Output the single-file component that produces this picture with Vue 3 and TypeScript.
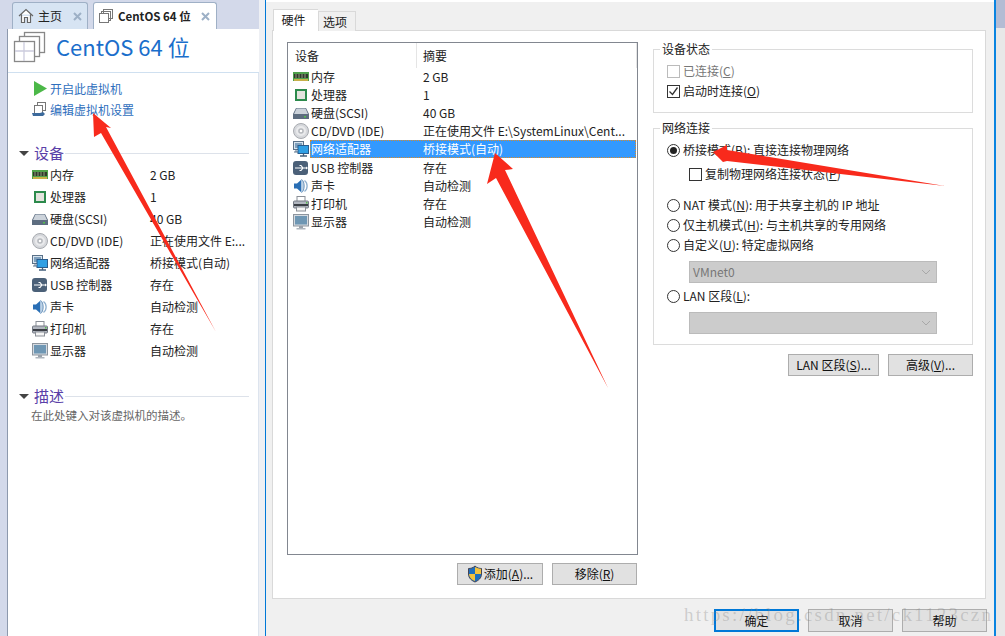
<script setup lang="ts">
interface Row { icon: string; name: string; value: string; selected?: boolean }
const sideRows: Row[] = [
  { icon: 'ram', name: '内存', value: '2 GB' },
  { icon: 'cpu', name: '处理器', value: '1' },
  { icon: 'disk', name: '硬盘(SCSI)', value: '40 GB' },
  { icon: 'cd', name: 'CD/DVD (IDE)', value: '正在使用文件 E:...' },
  { icon: 'net', name: '网络适配器', value: '桥接模式(自动)' },
  { icon: 'usb', name: 'USB 控制器', value: '存在' },
  { icon: 'sound', name: '声卡', value: '自动检测' },
  { icon: 'print', name: '打印机', value: '存在' },
  { icon: 'screen', name: '显示器', value: '自动检测' },
]
const dialogRows: Row[] = sideRows.map((r) =>
  r.icon === 'cd'
    ? { ...r, value: '正在使用文件 E:\\SystemLinux\\Cent...' }
    : r.icon === 'net'
      ? { ...r, selected: true }
      : r,
)
const icons: Record<string, string> = {
  ram: '<rect x="0" y="3" width="16" height="9" fill="#4fa04a"/><rect x="1" y="5" width="14" height="4" fill="#2f3a2c"/><path d="M3 5V9M6 5V9M9 5V9M12 5V9" stroke="#8f9a7c"/><rect x="1" y="10" width="14" height="2" fill="#c7b04a"/>',
  cpu: '<rect x="2" y="2" width="12" height="12" fill="#2c8a4c"/><rect x="4" y="4" width="8" height="8" fill="#e3e3de"/>',
  disk: '<path d="M3 3H13L16 9V14H0V9Z" fill="#5d6d80"/><path d="M3.500 3.500H12.500L15 9H1Z" fill="#ccd3db"/><rect x="11" y="11" width="2" height="1.500" fill="#54c04c"/>',
  cd: '<circle cx="8" cy="8" r="7.500" fill="#d6d8dc" stroke="#a8abb0"/><circle cx="8" cy="8" r="5" fill="#e9eaec"/><circle cx="8" cy="8" r="2.800" fill="#b5b8bd"/><circle cx="8" cy="8" r="1.300" fill="#fff"/>',
  net: '<rect x="0.500" y="0.500" width="10" height="8" fill="#d8e4ee" stroke="#5a7188"/><rect x="2" y="2" width="7" height="5" fill="#7fa0bd"/><path d="M1 11H5M3 9V11" stroke="#5a7188"/><rect x="5" y="4.500" width="10.500" height="8" fill="#2f9fe4" stroke="#2a5c8c"/><path d="M7 15H14M10.500 13V15" stroke="#44607c" stroke-width="1.300"/>',
  usb: '<rect x="0" y="1" width="15" height="14" rx="3" fill="#4b6078"/><path d="M2 8H13M10 8 8 5.500H6.500M10 8 8 10.500H6.500" fill="none" stroke="#fff" stroke-width="1.200"/><path d="M13 6.500 15 8 13 9.500Z" fill="#fff"/>',
  sound: '<path d="M1 5.500H4L8.500 1.500V14.500L4 10.500H1Z" fill="#2a6fb5"/><path d="M8.500 1.500C12 3 12 13 8.500 14.500" fill="#bcd2e6" stroke="#6a93bb"/><path d="M11.500 2.500C15 5 15 11 11.500 13.500" fill="none" stroke="#8fb0cf" stroke-width="1.300"/>',
  print: '<rect x="4" y="0.500" width="8" height="5" fill="#fff" stroke="#8a8f97"/><rect x="0.500" y="5" width="15" height="7" rx="1" fill="#b2b7c0" stroke="#747a84"/><rect x="1" y="8" width="14" height="2" fill="#3b3f46"/><rect x="3.500" y="11" width="9" height="4" fill="#f5f5f5" stroke="#8a8f97"/><rect x="13" y="6" width="1.500" height="1.500" fill="#54c04c"/>',
  screen: '<rect x="0.500" y="0.500" width="15" height="11.500" fill="#d5dae0" stroke="#8d959e"/><rect x="2" y="2" width="12" height="8.500" fill="#6f97b4"/><path d="M6 12H10V14H6Z" fill="#9aa2ab"/><rect x="3.500" y="14" width="9" height="1.500" fill="#aeb5bd"/>',
}
const arrows = [
  '93 113 111 128 106 127 216 332 101 133 94 137',
  '495 153 513 169 505 170 608 388 496 178 487 184',
  '713 152 727 145 727 150 945 186 727 161 723 162',
]
</script>

<template>
  <div class="screen">
    <aside class="side">
      <div class="tabs">
        <div class="tab home">
          <svg width="16" height="16" viewBox="0 0 16 16"><path d="M1 8 8 1.500 15 8M3.500 6.500V14.500H6.500V9.500H9.500V14.500H12.500V6.500" fill="#fff" stroke="#666" stroke-width="1.200"/></svg>
          <span>主页</span>
          <svg class="x" width="9" height="9" viewBox="0 0 9 9"><path d="M1 1 8 8M8 1 1 8" stroke="#9db0c6" stroke-width="2"/></svg>
        </div>
        <div class="tab active">
          <svg width="16" height="16" viewBox="0 0 16 16" fill="none" stroke="#777"><rect x="5.500" y="1.500" width="9" height="9"/><rect x="3.500" y="3.500" width="9" height="9"/><rect x="1.500" y="5.500" width="9" height="9" fill="#fff"/></svg>
          <strong>CentOS 64 位</strong>
          <svg class="x" width="9" height="9" viewBox="0 0 9 9"><path d="M1 1 8 8M8 1 1 8" stroke="#9db0c6" stroke-width="2"/></svg>
        </div>
      </div>
      <div class="body">
        <header class="title">
          <svg width="33" height="33" viewBox="0 0 33 33" fill="none" stroke="#888" stroke-width="1.300"><rect x="11.500" y="1.500" width="20" height="20" fill="#fff"/><rect x="6.500" y="5.500" width="20" height="20" fill="#fff"/><rect x="1.500" y="10.500" width="20" height="20" fill="#fff"/><path d="M11 11V30M2 20H21" stroke="#ccd"/></svg>
          <h1>CentOS 64 位</h1>
        </header>
        <div class="pane">
          <div class="actions">
            <a><svg width="13" height="15" viewBox="0 0 13 15"><path d="M0 0 13 7.500 0 15Z" fill="#4cb848"/></svg>开启此虚拟机</a>
            <a class="edit"><svg width="16" height="18" viewBox="0 0 16 18"><rect x="5.500" y="1.500" width="8" height="8" fill="#fff" stroke="#777"/><rect x="2.500" y="4.500" width="8" height="8" fill="#fff" stroke="#777"/><path d="M0 12H8L11 11 13 13 11 15H3L1 15Z" fill="#3c6a9c"/></svg>编辑虚拟机设置</a>
          </div>
          <h2 class="sect first"><i class="caret"></i><span>设备</span><em></em></h2>
          <ul class="devices">
            <li v-for="r in sideRows" :key="r.name">
              <span class="name"><svg class="icon" width="16" height="16" viewBox="0 0 16 16" v-html="icons[r.icon]"></svg>{{ r.name }}</span>
              <span class="val">{{ r.value }}</span>
            </li>
          </ul>
          <h2 class="sect second"><i class="caret"></i><span>描述</span><em></em></h2>
          <p class="hint">在此处键入对该虚拟机的描述。</p>
        </div>
      </div>
    </aside>

    <section class="dialog">
      <div class="dlg-tabs">
        <div class="dt on">硬件</div>
        <div class="dt">选项</div>
      </div>
      <div class="sheet">
        <div class="left-col">
          <div class="list">
            <div class="list-head"><span>设备</span><span>摘要</span></div>
            <div v-for="r in dialogRows" :key="r.name" class="lrow" :class="{ sel: r.selected }">
              <svg class="icon" width="16" height="16" viewBox="0 0 16 16" v-html="icons[r.icon]"></svg>
              <div class="lbody">
                <span class="lname">{{ r.name }}</span>
                <span class="lval">{{ r.value }}</span>
              </div>
            </div>
          </div>
          <div class="list-btns">
            <button class="btn add">
              <svg width="16" height="18" viewBox="0 0 16 18"><path d="M8 1C6 3 3.500 3.500 1.500 3.500V9C1.500 13 4.500 15.500 8 17 11.500 15.500 14.500 13 14.500 9V3.500C12.500 3.500 10 3 8 1Z" fill="#1f6fbd" stroke="#445"/><path d="M8 2V9H14V3.800C12 3.800 10 3.200 8 2ZM8 9H2C2.200 12.500 5 15 8 16Z" fill="#f4c33d"/></svg>
              添加(<u>A</u>)...
            </button>
            <button class="btn">移除(<u>R</u>)</button>
          </div>
        </div>
        <div class="right-col">
          <fieldset class="group status">
            <legend>设备状态</legend>
            <label class="opt dim"><i class="check dis"></i>已连接(<u>C</u>)</label>
            <label class="opt"><i class="check"><svg width="11" height="11" viewBox="0 0 11 11"><path d="M1.500 5.500 4.500 8.500 9.500 1.500" fill="none" stroke="#333" stroke-width="1.300"/></svg></i>启动时连接(<u>O</u>)</label>
          </fieldset>
          <fieldset class="group net">
            <legend>网络连接</legend>
            <label class="opt"><i class="radio on"></i>桥接模式(<u>B</u>): 直接连接物理网络</label>
            <label class="opt sub"><i class="check"></i>复制物理网络连接状态(<u>P</u>)</label>
            <label class="opt gap"><i class="radio"></i>NAT 模式(<u>N</u>): 用于共享主机的 IP 地址</label>
            <label class="opt"><i class="radio"></i>仅主机模式(<u>H</u>): 与主机共享的专用网络</label>
            <label class="opt"><i class="radio"></i>自定义(<u>U</u>): 特定虚拟网络</label>
            <div class="combo">VMnet0<svg width="10" height="6" viewBox="0 0 10 6"><path d="M1 1 5 5 9 1" fill="none" stroke="#a8a8a8"/></svg></div>
            <label class="opt"><i class="radio"></i>LAN 区段(<u>L</u>):</label>
            <div class="combo"><svg width="10" height="6" viewBox="0 0 10 6"><path d="M1 1 5 5 9 1" fill="none" stroke="#a8a8a8"/></svg></div>
          </fieldset>
          <div class="net-btns">
            <button class="btn">LAN 区段(<u>S</u>)...</button>
            <button class="btn">高级(<u>V</u>)...</button>
          </div>
        </div>
      </div>
      <footer class="foot">
        <button class="btn primary">确定</button>
        <button class="btn">取消</button>
        <button class="btn">帮助</button>
      </footer>
    </section>
    <div class="rail"></div>

    <span class="mark">https://blog.csdn.net/ck1123czn</span>
    <svg class="arrows" width="1005" height="636" viewBox="0 0 1005 636">
      <polygon v-for="a in arrows" :key="a" :points="a" fill="#f82a1c"/>
    </svg>
  </div>
</template>

<style>
html, body { margin: 0; background: #fff; }
</style>

<style scoped>
.screen {
  position: relative;
  width: 1005px;
  height: 636px;
  overflow: hidden;
  display: flex;
  background: #eef0f4;
  font: 12px/16px "Noto Sans CJK SC", "Liberation Sans", sans-serif;
  color: #222;
}
.side {
  width: 259px;
  flex: none;
  display: flex;
  flex-direction: column;
  background: #d3d9ea;
  padding-left: 7px;
  box-sizing: border-box;
}
.tabs { display: flex; gap: 5px; height: 29px; padding: 2px 0 0 5px; box-sizing: border-box; flex: none; }
.tab {
  display: flex;
  align-items: center;
  height: 27px;
  box-sizing: border-box;
  border: 1px solid #9fb0c6;
  border-bottom: 0;
  border-radius: 3px 3px 0 0;
  padding: 0 5px;
  gap: 4px;
  background: #d7e4f3;
}
.tab.home { width: 76px; }
.tab.active { width: 124px; background: #fff; padding: 0 6px 0 4px; }
.tab strong { font-size: 11.500px; font-weight: 700; white-space: nowrap; }
.x { margin-left: auto; }
.body { flex: 1; background: #fff; border-left: 1px solid #8d99ad; display: flex; flex-direction: column; min-height: 0; }
.title { height: 44px; display: flex; align-items: center; gap: 10px; padding: 0 0 7px 5px; border-bottom: 1px solid #cfe0f0; flex: none; box-sizing: border-box; }
.title h1 { margin: -2px 0 0; font: 400 22px/28px "Noto Sans CJK SC", sans-serif; color: #1a6ecb; }
.pane { flex: 1; border-right: 1px solid #dde4ee; padding-left: 24px; }
.actions { padding-top: 5px; }
.actions a { display: flex; align-items: center; height: 21px; color: #2f6fbd; gap: 3px; }
.actions a svg { margin-left: 2px; }
.actions a.edit { gap: 2px; height: 22px; }
.actions a.edit svg { margin: 0; }
.sect { display: flex; align-items: center; margin: 0 9px 0 -13px; font: 400 15px/18px "Noto Sans CJK SC", sans-serif; color: #5a3fa8; height: 20px; }
.sect.first { margin-top: 22px; }
.sect.second { margin-top: 24px; }
.sect span { margin-left: 5px; }
.sect em { flex: 1; height: 1px; background: #dde2ea; margin-left: 1px; }
.caret { width: 0; height: 0; border: 5px solid transparent; border-top: 5px solid #444; border-bottom: 0; }
.devices { list-style: none; margin: 1px 0 0; padding: 0; }
.devices li { display: flex; height: 22px; align-items: center; }
.name { width: 118px; display: flex; align-items: center; white-space: nowrap; }
.val { white-space: nowrap; }
.icon { flex: none; margin-right: 2px; }
.hint { margin: 1px 0 0 -1px; color: #666; font-size: 11.500px; }

.dialog { width: 731px; margin-left: 6px; flex: none; background: linear-gradient(#fff 0 2px, #f0f0f0 2px); border-left: 1px solid #0078d7; border-right: 2px solid #0a84e0; box-sizing: border-box; display: flex; flex-direction: column; }
.rail { flex: 1; background: linear-gradient(#b4bcd4 0 28px, #e8e8e8 28px); }
.dlg-tabs { display: flex; height: 31px; padding-left: 7px; box-sizing: border-box; flex: none; position: relative; z-index: 1; }
.dt { height: 20px; width: 38px; background: #f0f0f0; border: 1px solid #d9d9d9; border-bottom: 0; text-align: center; box-sizing: border-box; margin-top: 11px; padding-right: 4px; line-height: 20px; }
.dt.on { height: 22px; width: 45px; margin-top: 9px; background: #fff; border-right: 0; padding-right: 5px; line-height: 20px; }
.sheet { width: 714px; height: 569px; flex: none; background: #fff; border: 1px solid #d9d9d9; margin: -1px 0 0 6px; box-sizing: border-box; display: flex; padding: 11px 0 0 14px; }
.left-col { width: 351px; flex: none; display: flex; flex-direction: column; }
.list { height: 513px; box-sizing: border-box; border: 1px solid #828790; background: #fff; flex: none; }
.list-head { display: flex; height: 25px; align-items: center; padding-left: 7px; background: linear-gradient(90deg, #fff 128px, #e5e5e5 128px 129px, #fff 129px, #fff 348px, #e5e5e5 348px); }
.list-head span:first-child { width: 128px; }
.lrow { display: flex; align-items: center; height: 18px; padding: 0 1px 0 5px; white-space: nowrap; }
.lrow .icon { margin-right: 1px; }
.lbody { flex: 1; display: flex; align-items: center; height: 100%; }
.lname { width: 112px; padding-left: 1px; flex: none; }
.lval { flex: 1; }
.lrow.sel { height: 18px; margin-bottom: 1px; }
.lrow.sel .lbody { background: #3399ff; color: #fff; outline: 1px dotted #d98a2b; outline-offset: -1px; }
.list-btns { display: flex; justify-content: flex-end; gap: 9px; margin-top: 8px; padding-right: 1px; }
.btn { width: 85px; height: 22px; font: inherit; color: #111; background: #e1e1e1; border: 1px solid #adadad; display: inline-flex; align-items: center; justify-content: center; padding: 0; white-space: nowrap; }
.btn.add { width: 86px; }
.btn svg { margin-right: 1px; }
.right-col { margin-left: 15px; width: 320px; flex: none; }
.group { margin: 0; padding: 4px 0 0 13px; border: 1px solid #dcdcdc; min-width: 0; box-sizing: border-box; }
.group legend { padding: 0 2px; margin-left: -7px; line-height: 16px; }
.status { height: 72px; margin-top: -1px; }
.net { height: 225px; margin-top: 7px; }
.opt { display: flex; align-items: center; height: 20px; white-space: nowrap; }
.opt.dim { color: #777; }
.opt.sub { margin-left: 22px; margin-top: 4px; }
.opt.gap { margin-top: 11px; }
.check { width: 13px; height: 13px; border: 1px solid #333; box-sizing: border-box; background: #fff; margin-right: 3px; display: flex; align-items: center; justify-content: center; flex: none; }
.check.dis { border-color: #bbb; }
.radio { width: 13px; height: 13px; border-radius: 50%; border: 1px solid #333; box-sizing: border-box; background: #fff; margin-right: 3px; flex: none; position: relative; }
.radio.on::after { content: ""; position: absolute; left: 2px; top: 2px; width: 7px; height: 7px; border-radius: 50%; background: #222; }
.combo { width: 248px; height: 22px; margin: 6px 0 3px 22px; box-sizing: border-box; background: #cccccc; border: 1px solid #bbb; display: flex; align-items: center; padding: 0 5px 0 3px; color: #777; }
.combo svg { margin-left: auto; }
.net-btns { display: flex; justify-content: flex-end; gap: 9px; margin-top: 9px; }
.net-btns .btn:first-child { width: 91px; }
.foot { flex: 1; display: flex; gap: 9px; padding: 10px 0 0 448px; }
.foot .btn { height: 23px; }
.btn.primary { border: 2px solid #0078d7; }
.mark { position: absolute; left: 684px; top: 603px; font: 19px/24px "Liberation Serif", serif; letter-spacing: 2.200px; color: rgba(130, 130, 130, 0.32); white-space: nowrap; pointer-events: none; }
.arrows { position: absolute; left: 0; top: 0; pointer-events: none; }
</style>
